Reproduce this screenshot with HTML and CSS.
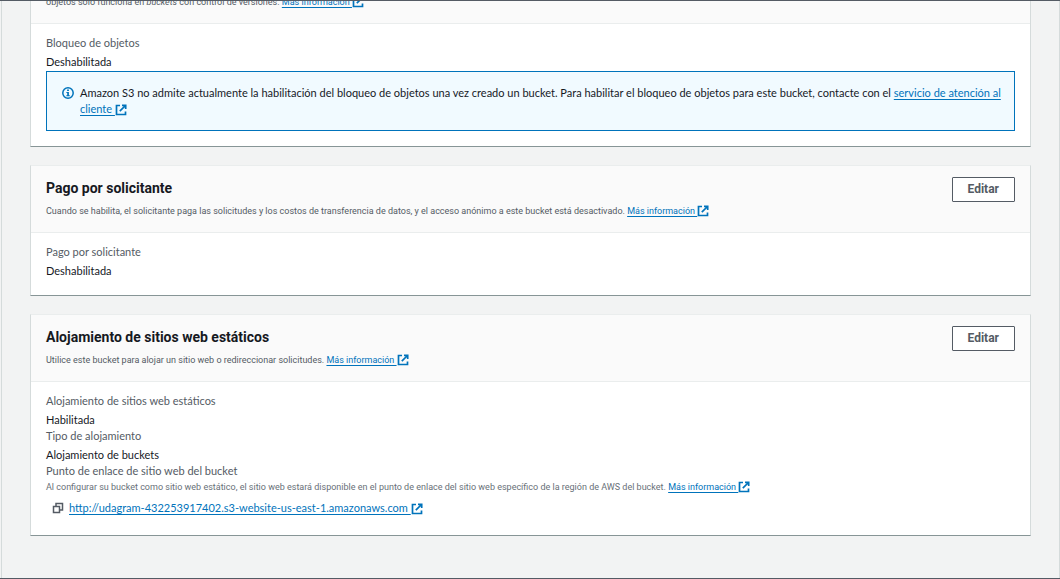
FILE: index.html
```html
<!DOCTYPE html>
<html lang="es">
<head>
<meta charset="utf-8">
<title>Propiedades del bucket</title>
<link rel="stylesheet" href="styles.css">
</head>
<body class="page">
<svg class="sprite" aria-hidden="true">
  <symbol id="external" viewBox="0 0 12 12">
    <path d="M5 1.500H1.500v9h9V7.500" fill="none" stroke="currentColor" stroke-width="1.7"/>
    <path d="M7 1.300h3.700V5M10.500 1.500L4.800 7.200" fill="none" stroke="currentColor" stroke-width="1.7"/>
  </symbol>
  <symbol id="info" viewBox="0 0 12 12">
    <circle cx="6" cy="6" r="5.200" fill="none" stroke="currentColor" stroke-width="1.5"/>
    <path d="M5.100 2.600h1.800v1.500H5.100zM4.400 5h2.500v3.200h.9v1.100H4.300V8.200h.9V6.100h-.8z" fill="currentColor"/>
  </symbol>
  <symbol id="copy" viewBox="0 0 12 12">
    <path d="M1.500 4.500h6v6h-6zM4 4.500V1.500h6.500V8H7.500" fill="none" stroke="currentColor" stroke-width="1.5"/>
  </symbol>
</svg>
<main class="content">
  <section class="card card-first">
    <header class="card-header">
      <p class="description">objetos solo funciona en <em>buckets</em> con control de versiones. <a class="link" href="#">Más información <svg class="icon"><use href="#external"/></svg></a></p>
    </header>
    <div class="card-body">
      <dl class="fields">
        <dt class="label">Bloqueo de objetos</dt>
        <dd class="value">Deshabilitada</dd>
      </dl>
      <div class="alert">
        <svg class="alert-icon"><use href="#info"/></svg>
        <p class="alert-text">Amazon S3 no admite actualmente la habilitación del bloqueo de objetos una vez creado un bucket. Para habilitar el bloqueo de objetos para este bucket, contacte con el <a class="link" href="#">servicio de atención al cliente <svg class="icon"><use href="#external"/></svg></a></p>
      </div>
    </div>
  </section>

  <section class="card">
    <header class="card-header">
      <div class="heading">
        <h2 class="title">Pago por solicitante</h2>
        <p class="description">Cuando se habilita, el solicitante paga las solicitudes y los costos de transferencia de datos, y el acceso anónimo a este bucket está desactivado. <a class="link" href="#">Más información <svg class="icon"><use href="#external"/></svg></a></p>
      </div>
      <button class="button" type="button">Editar</button>
    </header>
    <div class="card-body">
      <dl class="fields">
        <dt class="label">Pago por solicitante</dt>
        <dd class="value">Deshabilitada</dd>
      </dl>
    </div>
  </section>

  <section class="card">
    <header class="card-header">
      <div class="heading">
        <h2 class="title">Alojamiento de sitios web estáticos</h2>
        <p class="description">Utilice este bucket para alojar un sitio web o redireccionar solicitudes. <a class="link" href="#">Más información <svg class="icon"><use href="#external"/></svg></a></p>
      </div>
      <button class="button" type="button">Editar</button>
    </header>
    <div class="card-body">
      <dl class="fields">
        <dt class="label">Alojamiento de sitios web estáticos</dt>
        <dd class="value">Habilitada</dd>
        <dt class="label">Tipo de alojamiento</dt>
        <dd class="value">Alojamiento de buckets</dd>
        <dt class="label">Punto de enlace de sitio web del bucket</dt>
        <dd class="hint">Al configurar su bucket como sitio web estático, el sitio web estará disponible en el punto de enlace del sitio web específico de la región de AWS del bucket. <a class="link" href="#">Más información <svg class="icon"><use href="#external"/></svg></a></dd>
        <dd class="endpoint">
          <button class="copy" type="button" aria-label="Copiar"><svg class="copy-icon"><use href="#copy"/></svg></button>
          <a class="link" href="#">http://udagram-432253917402.s3-website-us-east-1.amazonaws.com <svg class="icon"><use href="#external"/></svg></a>
        </dd>
      </dl>
    </div>
  </section>
</main>
</body>
</html>
```
FILE: styles.css
```css
* {
  box-sizing: border-box;
}

.page {
  display: flex;
  height: 100vh;
  margin: 0;
  overflow: hidden;
  border-top: 1px solid #545b64;
  border-bottom: 1px solid #545b64;
  background: #f2f3f3;
  color: #16191f;
  font: 11px/16px Lato, "Noto Sans", sans-serif;
}

.sprite {
  display: none;
}

.content {
  display: flex;
  flex: 1;
  flex-direction: column;
  gap: 18px;
  margin-left: 1px;
  padding: 0 28px;
  border: solid #d5dbdb;
  border-width: 0 1px;
}

.card {
  border: 1px solid #d5dbdb;
  border-top-color: #eaeded;
  border-bottom-color: #879596;
  background: #fff;
}

.card-first {
  margin-top: -8px;
}

.card-header {
  display: flex;
  align-items: flex-start;
  justify-content: space-between;
  padding: 11px 15px 13px;
  border-bottom: 1px solid #eaeded;
  background: #fafafa;
}

.card-first .card-header {
  padding-top: 0;
}

.title {
  margin: 0 0 4px;
  font: 700 14px/22px Roboto, "Noto Sans", sans-serif;
}

.description,
.hint {
  margin: 0;
  color: #545b64;
  font: 9px/16px Roboto, "Noto Sans", sans-serif;
}

.hint {
  color: #687078;
}

.button {
  padding: 3px 15px;
  border: 1px solid #545b64;
  border-radius: 1px;
  background: #fff;
  color: #545b64;
  font: 700 12px/17px Roboto, "Noto Sans", sans-serif;
}

.card-body {
  padding: 11px 15px 16px;
}

.card-first .card-body {
  padding-bottom: 15px;
}

.fields {
  margin: 0;
}

.label {
  color: #545b64;
}

.value {
  margin: 3px 0 0;
}

.link {
  color: #0073bb;
  text-decoration: underline;
  text-underline-offset: 2px;
}

.icon {
  width: 12px;
  height: 12px;
  vertical-align: -3px;
}

.alert {
  display: flex;
  gap: 6px;
  margin-top: 1px;
  padding: 13px 12px 13px 15px;
  border: 1px solid #0073bb;
  background: #f1faff;
}

.alert-icon {
  flex: none;
  width: 12px;
  height: 12px;
  margin-top: 2px;
  color: #0073bb;
}

.alert-text {
  margin: 0;
}

.endpoint {
  display: flex;
  align-items: center;
  gap: 5px;
  margin: 5px 0 3px;
  padding-left: 6px;
}

.copy {
  display: flex;
  padding: 0;
  border: 0;
  background: none;
  color: #545b64;
}

.copy-icon {
  width: 12px;
  height: 12px;
}
```
